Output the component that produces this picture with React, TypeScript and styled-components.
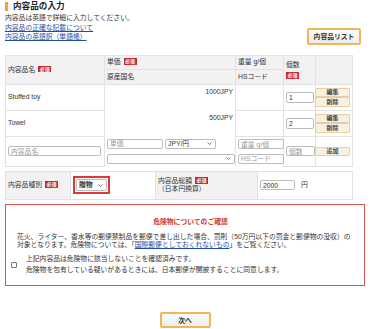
import React, { useState } from 'react'
import styled, { createGlobalStyle } from 'styled-components'

const GlobalStyle = createGlobalStyle`
  html, body {
    margin: 0;
    padding: 0;
    background: #fff;
  }
  body {
    font-family: 'Liberation Sans', 'Noto Sans CJK JP', sans-serif;
    color: #333;
    font-size: 6.8px;
  }
`

const jp = `'Liberation Sans', 'Noto Sans CJK JP', sans-serif`

const Page = styled.div`
  width: 370px;
  height: 329px;
  padding: 2px 0 0;
  box-sizing: border-box;
  overflow: hidden;
`

const SectionTitle = styled.h2`
  margin: 0 0 0 5px;
  padding: 0 0 0 5px;
  border-left: 3px solid #eda63c;
  font-size: 8.6px;
  line-height: 9px;
  font-weight: bold;
  color: #222;
`

const IntroRow = styled.div`
  display: flex;
  justify-content: space-between;
  align-items: flex-end;
  padding: 0 9px 0 5px;
`

const Intro = styled.div`
  line-height: 9.3px;
  padding: 2.4px 0 3.6px;

  p {
    margin: 0;
  }

  a {
    display: block;
    color: #1f4ea3;
    text-decoration: underline;
  }
`

const OrangeButton = styled.button<{ $w: number; $h: number }>`
  width: ${(p) => p.$w}px;
  height: ${(p) => p.$h}px;
  padding: 0;
  border: 2px solid #f0b554;
  border-radius: 2px;
  background: linear-gradient(#fefefe, #ececec);
  font-family: ${jp};
  font-size: 6.8px;
  font-weight: bold;
  color: #333;
`

const Table = styled.table<{ $top: number }>`
  width: 347px;
  margin: ${(p) => p.$top}px 0 0 5px;
  border-collapse: collapse;
  table-layout: fixed;
  font-size: 6.8px;
  line-height: 8px;

  td,
  th {
    border: 1px solid #e2e2e2;
    padding: 0 2px;
    font-weight: normal;
    text-align: left;
    box-sizing: border-box;
  }

  th {
    background: #f2f2f2;
  }
`

const Line = styled.tr<{ $h: number }>`
  height: ${(p) => p.$h}px;
`

const HeadCell = styled.th<{ $valign?: string }>`
  vertical-align: ${(p) => p.$valign ?? 'middle'};
`

const Badge = styled.span`
  display: inline-block;
  margin-left: 3px;
  padding: 0 1.5px;
  background: #c8262b;
  color: #fff;
  font-size: 5px;
  font-weight: bold;
  line-height: 6.5px;
  vertical-align: 1px;
`

const BlockBadge = styled(Badge)`
  display: block;
  width: fit-content;
  margin: 3px 0 0;
`

const ItemCell = styled.td<{ $align?: string; $valign?: string }>`
  text-align: ${(p) => p.$align ?? 'left'} !important;
  vertical-align: ${(p) => p.$valign ?? 'middle'};
`

const NoLine = styled(ItemCell)`
  border-top: none !important;
  border-bottom: none !important;
`

const TextBox = styled.input<{ $w: number; $h?: number }>`
  width: ${(p) => p.$w}px;
  height: ${(p) => p.$h ?? 10}px;
  box-sizing: border-box;
  padding: 0 2px;
  border: 1px solid #bbb;
  border-radius: 2px;
  font-family: ${jp};
  font-size: 6.8px;
  color: #333;
  outline: none;
  vertical-align: middle;

  &::placeholder {
    color: #999;
  }
`

const SelectBox = styled.div<{ $w: number; $h?: number; $bold?: boolean }>`
  display: inline-flex;
  align-items: center;
  justify-content: space-between;
  width: ${(p) => p.$w}px;
  height: ${(p) => p.$h ?? 10}px;
  box-sizing: border-box;
  padding: 0 3px 0 2px;
  border: 1px solid #bbb;
  border-radius: 2px;
  background: #fff;
  font-weight: ${(p) => (p.$bold ? 'bold' : 'normal')};
  line-height: 8px;
  vertical-align: middle;
`

const Chevron = () => (
  <svg width="5" height="3" viewBox="0 0 5 3">
    <path d="M0.5 0.5 L2.5 2.5 L4.5 0.5" fill="none" stroke="#555" strokeWidth="0.8" />
  </svg>
)

const SmallButtons = styled.div`
  display: flex;
  flex-direction: column;
  align-items: flex-end;
`

const SmallButton = styled.button`
  width: 35px;
  height: 9.5px;
  padding: 0;
  border: 1px solid #e6cfa5;
  border-radius: 1px;
  background: #f8f0e0;
  font-family: ${jp};
  font-size: 6px;
  font-weight: bold;
  color: #444;
  line-height: 7px;
`

const Row = styled.div<{ $gap?: number }>`
  display: flex;
  align-items: center;
  gap: ${(p) => p.$gap ?? 2}px;
`

const RedFrame = styled.div`
  display: inline-block;
  padding: 1px;
  border: 2px solid #e1363b;
  line-height: 0;
`

const DangerBox = styled.div`
  margin: 4px 5px 0;
  height: 82px;
  box-sizing: border-box;
  border: 1.5px solid #d9534f;
  padding: 12px 0 0 11px;

  h3 {
    margin: 0 0 7px;
    font-size: 6.8px;
    line-height: 9px;
    font-weight: bold;
    color: #d13a2f;
    text-align: center;
  }

  p {
    margin: 0;
    line-height: 8.5px;
  }

  a {
    color: #1f4ea3;
  }
`

const CheckRow = styled.label`
  display: flex;
  align-items: center;
  gap: 9px;
  margin: 4.5px 0 0 -6px;

  p {
    line-height: 10.5px;
  }
`

const CheckMark = styled.input`
  appearance: none;
  width: 6px;
  height: 6px;
  margin: 0;
  border: 1px solid #777;
  border-radius: 1px;
  background: #fff;
  flex-shrink: 0;

  &:checked {
    background: #1f4ea3;
  }
`

const Footer = styled.div`
  display: flex;
  justify-content: center;
  margin-top: 26px;
`

type Item = { name: string; price: string; qty: string }

const items: Item[] = [
  { name: 'Stuffed toy', price: '1000JPY', qty: '1' },
  { name: 'Towel', price: '500JPY', qty: '2' },
]

export default function App() {
  const [agree, setAgree] = useState(false)

  return (
    <Page>
      <GlobalStyle />
      <SectionTitle>内容品の入力</SectionTitle>
      <IntroRow>
        <Intro>
          <p>内容品は英語で詳細に入力してください。</p>
          <a href="#">内容品の正確な記載について</a>
          <a href="#">内容品の英語訳（単語帳）</a>
        </Intro>
        <OrangeButton $w={54} $h={17}>内容品リスト</OrangeButton>
      </IntroRow>

      <Table $top={10}>
        <colgroup>
          <col style={{ width: 99 }} />
          <col style={{ width: 131 }} />
          <col style={{ width: 48 }} />
          <col style={{ width: 32 }} />
          <col style={{ width: 37 }} />
        </colgroup>
        <thead>
          <Line $h={14}>
            <HeadCell rowSpan={2}>
              内容品名<Badge>必須</Badge>
            </HeadCell>
            <HeadCell>
              単価<Badge>必須</Badge>
            </HeadCell>
            <HeadCell>重量 g/個</HeadCell>
            <HeadCell rowSpan={2}>
              個数
              <BlockBadge>必須</BlockBadge>
            </HeadCell>
            <HeadCell rowSpan={2} />
          </Line>
          <Line $h={15}>
            <HeadCell>原産国名</HeadCell>
            <HeadCell>HSコード</HeadCell>
          </Line>
        </thead>
        <tbody>
          {items.map((item) => (
            <React.Fragment key={item.name}>
              <Line $h={15}>
                <ItemCell rowSpan={2}>{item.name}</ItemCell>
                <NoLine $align="right">{item.price}</NoLine>
                <ItemCell rowSpan={2} />
                <ItemCell rowSpan={2}>
                  <TextBox $w={28} $h={11} defaultValue={item.qty} />
                </ItemCell>
                <ItemCell rowSpan={2}>
                  <SmallButtons>
                    <SmallButton>編集</SmallButton>
                    <SmallButton>削除</SmallButton>
                  </SmallButtons>
                </ItemCell>
              </Line>
              <Line $h={11}>
                <NoLine />
              </Line>
            </React.Fragment>
          ))}
          <Line $h={15}>
            <ItemCell rowSpan={2}>
              <TextBox $w={93} placeholder="内容品名" />
            </ItemCell>
            <NoLine>
              <Row>
                <TextBox $w={56} placeholder="単価" />
                <SelectBox $w={51}>
                  JPY/円
                  <Chevron />
                </SelectBox>
              </Row>
            </NoLine>
            <NoLine>
              <TextBox $w={46} placeholder="重量 g/個" />
            </NoLine>
            <ItemCell rowSpan={2}>
              <TextBox $w={29} placeholder="個数" />
            </ItemCell>
            <ItemCell rowSpan={2}>
              <SmallButtons>
                <SmallButton>追加</SmallButton>
              </SmallButtons>
            </ItemCell>
          </Line>
          <Line $h={15}>
            <NoLine>
              <SelectBox $w={128}>
                <span />
                <Chevron />
              </SelectBox>
            </NoLine>
            <NoLine>
              <TextBox $w={46} placeholder="HSコード" />
            </NoLine>
          </Line>
        </tbody>
      </Table>

      <Table $top={4}>
        <colgroup>
          <col style={{ width: 65 }} />
          <col style={{ width: 85 }} />
          <col style={{ width: 102 }} />
          <col style={{ width: 95 }} />
        </colgroup>
        <tbody>
          <Line $h={28}>
            <HeadCell>
              内容品種別<Badge>必須</Badge>
            </HeadCell>
            <ItemCell>
              <RedFrame>
                <SelectBox $w={31} $h={12} $bold>
                  贈物
                  <Chevron />
                </SelectBox>
              </RedFrame>
            </ItemCell>
            <HeadCell>
              内容品総額<Badge>必須</Badge>
              <br />
              （日本円換算）
            </HeadCell>
            <ItemCell>
              <Row $gap={6}>
                <TextBox $w={35} defaultValue="2000" />円
              </Row>
            </ItemCell>
          </Line>
        </tbody>
      </Table>

      <DangerBox>
        <h3>危険物についてのご確認</h3>
        <p>
          花火、ライター、香水等の郵便禁制品を郵便で差し出した場合、罰則（50万円以下の罰金と郵便物の没収）の
          <br />
          対象となります。危険物については、「<a href="#">国際郵便としておくれないもの</a>」をご覧ください。
        </p>
        <CheckRow>
          <CheckMark type="checkbox" checked={agree} onChange={(e) => setAgree(e.target.checked)} />
          <p>
            上記内容品は危険物に該当しないことを確認済みです。
            <br />
            危険物を包有している疑いがあるときには、日本郵便が開披することに同意します。
          </p>
        </CheckRow>
      </DangerBox>

      <Footer>
        <OrangeButton $w={51} $h={16}>次へ</OrangeButton>
      </Footer>
    </Page>
  )
}
